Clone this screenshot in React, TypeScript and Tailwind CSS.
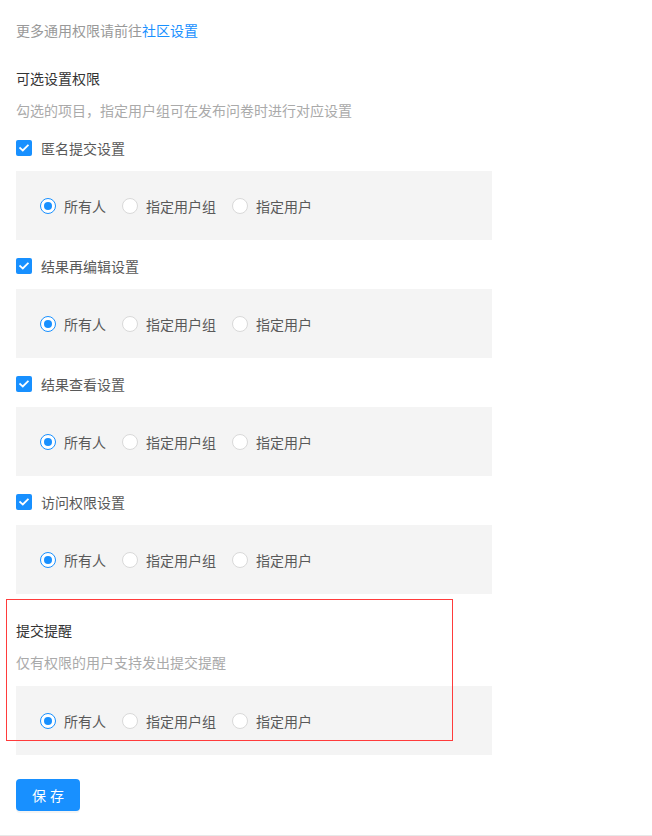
import React from 'react';

type Option = { label: string; checked?: boolean };

const OPTIONS: Option[] = [
  { label: '所有人', checked: true },
  { label: '指定用户组' },
  { label: '指定用户' },
];

const SECTIONS = ['匿名提交设置', '结果再编辑设置', '结果查看设置', '访问权限设置'];

const Checkbox: React.FC<{ label: string }> = ({ label }) => (
  <label className="flex items-center h-[22px] cursor-pointer">
    <span className="w-4 h-4 rounded-[2px] bg-[#1890ff] flex items-center justify-center">
      <svg width="10" height="8" viewBox="0 0 10 8" fill="none">
        <path d="M1.2 4.1 L3.8 6.5 L8.8 1.4" stroke="#fff" strokeWidth="1.8" strokeLinecap="square" />
      </svg>
    </span>
    <span className="pl-[9px] text-[14px] text-[#595959]">{label}</span>
  </label>
);

const RadioGroup: React.FC = () => (
  <div className="bg-[#f4f4f4] h-[69px] flex items-center pl-6 w-[476px]">
    {OPTIONS.map((opt) => (
      <label key={opt.label} className="flex items-center mr-2 cursor-pointer">
        {opt.checked ? (
          <span className="w-4 h-4 rounded-full border border-[#1890ff] bg-white flex items-center justify-center">
            <span className="w-2 h-2 rounded-full bg-[#1890ff]"></span>
          </span>
        ) : (
          <span className="w-4 h-4 rounded-full border border-[#d9d9d9] bg-white"></span>
        )}
        <span className="px-2 text-[14px] leading-[22px] text-[#595959]">{opt.label}</span>
      </label>
    ))}
  </div>
);

export default function App() {
  return (
    <div
      className="min-h-[836px] bg-white border-b border-[#e8e8e8] px-4 pt-[19px] pb-6 text-[14px] leading-[22px]"
      style={{ fontFamily: '"Noto Sans CJK SC", "Noto Sans", sans-serif' }}
    >
      <p className="text-[#999]">
        更多通用权限请前往<a className="text-[#1890ff] cursor-pointer">社区设置</a>
      </p>

      <h3 className="mt-[26px] text-[#333]">可选设置权限</h3>
      <p className="mt-[10px] text-[#aaa]">勾选的项目，指定用户组可在发布问卷时进行对应设置</p>

      <div className="mt-4 flex flex-col gap-[15px]">
        {SECTIONS.map((name) => (
          <div key={name} className="flex flex-col gap-3">
            <Checkbox label={name} />
            <RadioGroup />
          </div>
        ))}
      </div>

      <div className="relative pt-[25px]">
        {/* highlight frame around the reminder block */}
        <div className="absolute left-[-10px] top-[5px] w-[447px] h-[142px] border border-[#ff3b3b] pointer-events-none z-10"></div>
        <h3 className="text-[#333]">提交提醒</h3>
        <p className="mt-[10px] text-[#aaa]">仅有权限的用户支持发出提交提醒</p>
        <div className="mt-[13px]">
          <RadioGroup />
        </div>
      </div>

      <button className="mt-6 w-16 h-8 rounded bg-[#1890ff] text-white text-[14px] tracking-[4px] pl-1 shadow-[0_2px_0_rgba(0,0,0,0.045)]">
        保存
      </button>
    </div>
  );
}
